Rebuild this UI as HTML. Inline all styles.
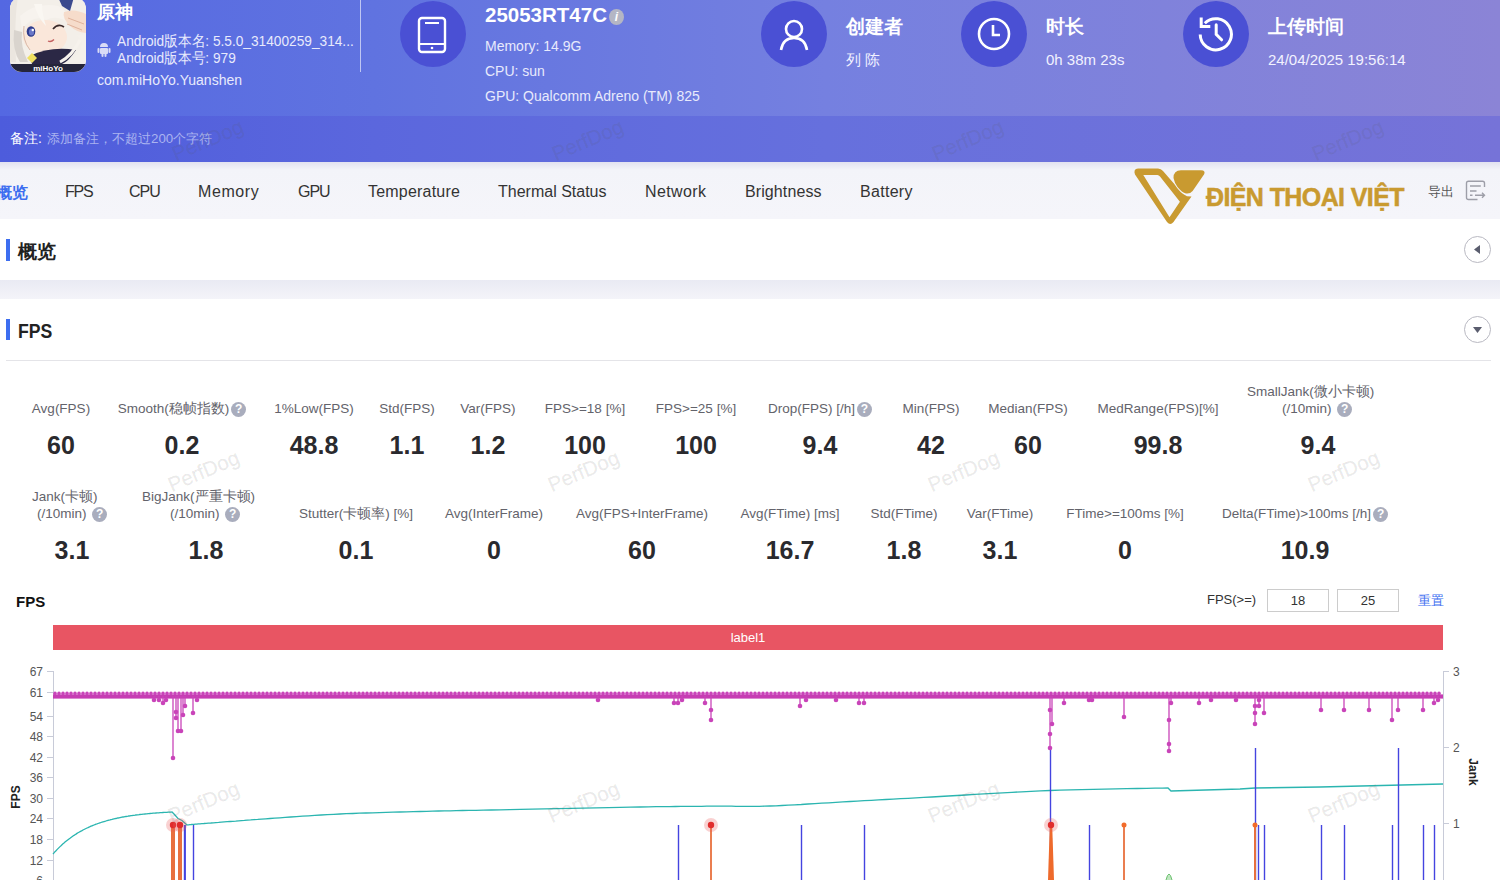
<!DOCTYPE html>
<html><head><meta charset="utf-8">
<style>
*{margin:0;padding:0;box-sizing:border-box}
html,body{width:1500px;height:880px;overflow:hidden;background:#fff;font-family:"Liberation Sans",sans-serif;position:relative}
.abs{position:absolute;white-space:nowrap}
#hdr{position:absolute;left:0;top:0;width:1500px;height:116px;background:linear-gradient(90deg,#5468e2 0%,#6073e0 25%,#7580e0 55%,#8b84d6 100%)}
#band{position:absolute;left:0;top:116px;width:1500px;height:46px;background:linear-gradient(90deg,#4d5cdc 0%,#5b67dd 25%,#6670dd 55%,#7673d8 100%)}
#nav{position:absolute;left:0;top:162px;width:1500px;height:57px;background:linear-gradient(180deg,#e2e2f0 0px,#f3f4f9 8px,#f5f5fa 100%)}
#sec1{position:absolute;left:0;top:219px;width:1500px;height:61px;background:#fff}
#gap{position:absolute;left:0;top:280px;width:1500px;height:19px;background:linear-gradient(180deg,#e9eaf3,#f4f4f9)}
.circ{position:absolute;width:66px;height:66px;border-radius:50%;background:#4a50d4}
.ht{position:absolute;color:#fff;font-weight:bold;font-size:19px;white-space:nowrap}
.hs{position:absolute;color:#e8eafc;font-size:14px;white-space:nowrap}
.tab{position:absolute;top:183px;font-size:16px;color:#333;white-space:nowrap}
.lbl{position:absolute;font-size:13.5px;color:#63636b;white-space:nowrap;text-align:center;line-height:17px}
.val{position:absolute;font-size:25px;font-weight:bold;color:#2a2a2e;white-space:nowrap;text-align:center}
.q{display:inline-block;width:15px;height:15px;border-radius:50%;background:#a9adbd;color:#fff;font-size:12px;font-weight:bold;line-height:15px;text-align:center;vertical-align:0px;margin-left:2px}
.wm{position:absolute;font-size:20.5px;color:rgba(90,90,90,0.12);transform:rotate(-23deg);-webkit-text-stroke:0.3px rgba(90,90,90,0.12);white-space:nowrap}
.chart{position:absolute;left:0;top:0}
.tk{font-size:12px;fill:#555;font-family:"Liberation Sans",sans-serif}
.ax{font-size:12px;fill:#222;font-weight:bold;font-family:"Liberation Sans",sans-serif}
.sbar{position:absolute;left:6px;width:4px;background:#3d6ef0}
.stitle{position:absolute;left:17px;font-size:19px;font-weight:bold;color:#222}
.tog{position:absolute;left:1464px;width:27px;height:27px;border-radius:50%;border:1.3px solid #b9b9c2;background:#fff}
.inp{position:absolute;top:589px;width:62px;height:23px;border:1px solid #ccc;font-size:13px;color:#333;text-align:center;line-height:21px}
</style></head><body>
<div id="hdr"></div>
<div id="band"></div>
<!-- app icon -->
<div class="abs" style="left:10px;top:-3px;width:76px;height:75px;border-radius:12px;overflow:hidden;background:#efe9e2">
  <svg width="76" height="75" viewBox="0 -3 76 75">
    <rect x="0" y="-3" width="76" height="75" fill="#f3efe9"/>
    <path d="M0,-3 L8,-3 Q4,20 6,62 L0,62Z" fill="#ebe6df"/>
    <path d="M4,30 Q2,50 10,62 L18,62 Q10,46 12,32Z" fill="#d9d4ce"/>
    <ellipse cx="35" cy="37" rx="22" ry="17" fill="#fae7da"/>
    <path d="M10,16 Q26,2 48,6 Q58,10 60,24 Q48,14 36,20 Q22,14 12,30Z" fill="#f7f3ee"/>
    <path d="M24,4 Q28,18 36,26 Q32,14 32,4Z" fill="#faf7f2"/>
    <path d="M14,26 Q12,40 20,50" stroke="#d8b8a8" stroke-width="1" fill="none"/>
    <ellipse cx="21" cy="31.5" rx="4.3" ry="5.3" fill="#2e3c8c"/>
    <ellipse cx="21.5" cy="32" rx="2.6" ry="3.6" fill="#6a78c8"/>
    <circle cx="22.8" cy="30" r="1.2" fill="#fff"/>
    <path d="M43,29 Q48,23 54,27" stroke="#3a2a2a" stroke-width="1.7" fill="none"/>
    <path d="M38,41 Q41,42.5 44,39.5" stroke="#c46060" stroke-width="1.3" fill="none"/>
    <path d="M54,12 Q64,8 76,14 L76,33 Q66,32 60,26 Q52,18 54,12Z" fill="#f6dccb"/>
    <path d="M58,18 L74,24 M57,24 L72,30" stroke="#d9a890" stroke-width="0.8" fill="none"/>
    <path d="M48,-3 L64,-3 L60,11 L52,6Z" fill="#3b4a8e"/>
    <path d="M62,36 Q70,34 72,44 Q70,56 58,62 L76,62 L76,34Z" fill="#f4f0ea"/>
    <path d="M20,56 Q40,46 66,50 Q58,62 52,64 L22,64Z" fill="#2b2845"/>
    <path d="M50,62 Q62,56 70,40" stroke="#f6f2ec" stroke-width="3" fill="none"/>
    <path d="M17,58 l5,-5 l5,5 l-5,5z" fill="#efe060"/>
    <rect x="0" y="64" width="76" height="8" fill="#25253a"/>
    <text x="38" y="71" text-anchor="middle" font-size="8" font-weight="bold" fill="#fff" font-family="Liberation Sans">miHoYo</text>
  </svg>
</div>
<div class="ht" style="left:97px;top:0px;font-size:18px">原神</div>
<svg class="abs" style="left:97px;top:42px" width="14" height="15" viewBox="0 0 14 15"><path d="M3,5 a4,4 0 0 1 8,0z" fill="#d9dcf6"/><rect x="3" y="6" width="8" height="6" rx="1" fill="#d9dcf6"/><rect x="0.5" y="6" width="2" height="5" rx="1" fill="#d9dcf6"/><rect x="11.5" y="6" width="2" height="5" rx="1" fill="#d9dcf6"/><rect x="4.5" y="11" width="2" height="4" rx="1" fill="#d9dcf6"/><rect x="7.5" y="11" width="2" height="4" rx="1" fill="#d9dcf6"/></svg>
<div class="hs" style="left:117px;top:31.5px;font-size:15px;transform:scaleX(0.913);transform-origin:0 0">Android版本名: 5.5.0_31400259_314...</div>
<div class="hs" style="left:117px;top:48.5px;font-size:15px;transform:scaleX(0.913);transform-origin:0 0">Android版本号: 979</div>
<div class="hs" style="left:97px;top:72px">com.miHoYo.Yuanshen</div>
<div class="abs" style="left:360px;top:0;width:1px;height:72px;background:rgba(255,255,255,0.6)"></div>

<div class="circ" style="left:400px;top:1px"></div>
<svg class="abs" style="left:417px;top:16px" width="30" height="38" viewBox="0 0 30 38"><rect x="2" y="2" width="26" height="34" rx="3" fill="none" stroke="#fff" stroke-width="2.4"/><line x1="8" y1="7" x2="22" y2="7" stroke="#fff" stroke-width="2"/><line x1="2" y1="28" x2="28" y2="28" stroke="#fff" stroke-width="2"/><circle cx="15" cy="32" r="1.3" fill="#fff"/></svg>
<div class="ht" style="left:485px;top:3px;font-size:20.5px">25053RT47C</div>
<div class="abs" style="left:609px;top:9px;width:15px;height:16px;border-radius:50%;background:#b4b6c4;color:#fff;font-size:12px;font-style:italic;font-weight:bold;text-align:center;line-height:16px">i</div>
<div class="hs" style="left:485px;top:38px">Memory: 14.9G</div>
<div class="hs" style="left:485px;top:63px">CPU: sun</div>
<div class="hs" style="left:485px;top:88px">GPU: Qualcomm Adreno (TM) 825</div>

<div class="circ" style="left:761px;top:1px"></div>
<svg class="abs" style="left:776px;top:16px" width="36" height="36" viewBox="0 0 36 36"><circle cx="18" cy="13" r="8" fill="none" stroke="#fff" stroke-width="2.6"/><path d="M5,34 Q7,22 18,22 Q29,22 31,34" fill="none" stroke="#fff" stroke-width="2.6"/></svg>
<div class="ht" style="left:846px;top:14px">创建者</div>
<div class="hs" style="left:846px;top:50.5px;font-size:15px;color:#f2f2ff">列 陈</div>

<div class="circ" style="left:961px;top:1px"></div>
<svg class="abs" style="left:976px;top:16px" width="36" height="36" viewBox="0 0 36 36"><circle cx="18" cy="18" r="15" fill="none" stroke="#fff" stroke-width="2.6"/><path d="M17,9 L17,19 L24,19" fill="none" stroke="#fff" stroke-width="2.6"/></svg>
<div class="ht" style="left:1046px;top:14px">时长</div>
<div class="hs" style="left:1046px;top:50.5px;font-size:15px;color:#f2f2ff">0h 38m 23s</div>

<div class="circ" style="left:1183px;top:1px"></div>
<svg class="abs" style="left:1198px;top:16px" width="36" height="36" viewBox="0 0 36 36"><path d="M2.2,18.5 A15.6,15.6 0 1 0 6.8,7.2" fill="none" stroke="#fff" stroke-width="3"/><path d="M3.2,1.5 V10.6 H12.3" fill="none" stroke="#fff" stroke-width="3"/><path d="M18.2,8.8 V18.4 L23.6,23.8" fill="none" stroke="#fff" stroke-width="3" stroke-linecap="round"/></svg>
<div class="ht" style="left:1268px;top:14px">上传时间</div>
<div class="hs" style="left:1268px;top:50.5px;font-size:15px;color:#f2f2ff">24/04/2025 19:56:14</div>

<div class="abs" style="left:10px;top:129.5px;font-size:14px;color:#fff">备注:</div>
<div class="abs" style="left:47px;top:130px;font-size:13.3px;color:#aab3f0">添加备注，不超过200个字符</div>

<div id="nav"></div>
<div class="tab" style="left:-4px;color:#3d6ef0;font-weight:bold;font-size:15.5px">概览</div>
<div class="tab" style="left:65px;letter-spacing:-1.2px">FPS</div>
<div class="tab" style="left:129px;letter-spacing:-1px">CPU</div>
<div class="tab" style="left:198px;letter-spacing:0.6px">Memory</div>
<div class="tab" style="left:298px;letter-spacing:-1px">GPU</div>
<div class="tab" style="left:368px;letter-spacing:0.2px">Temperature</div>
<div class="tab" style="left:498px;letter-spacing:0px">Thermal Status</div>
<div class="tab" style="left:645px;letter-spacing:0.4px">Network</div>
<div class="tab" style="left:745px;letter-spacing:0.1px">Brightness</div>
<div class="tab" style="left:860px;letter-spacing:0.3px">Battery</div>
<!-- logo -->
<svg class="abs" style="left:1125px;top:160px;z-index:5" width="90" height="70" viewBox="0 0 90 70"><path fill-rule="evenodd" d="M13,8.4 L33,8.4 Q36,8.6 38,11 L49.3,23.9 Q55,33 62,36.2 L66.5,36.6 L48.5,62 Q45.3,66 42,62 L10,14.5 Q8,9 13,8.4 Z M18.3,15.1 L32.5,15.1 Q33.8,15.2 35,16.5 L54.9,41.8 L44.5,57.3 Z" fill="#c99a30"/><path d="M48.5,18 Q48.5,10.3 56,10.3 L76,10.3 Q81,10.5 79,14.5 L67.6,31 Q65,34 61,33.4 Q57,32.6 52.5,27 Q49.5,23 48.5,18 Z" fill="#c99a30"/></svg>
<div class="abs" style="left:1206px;top:182.5px;font-size:25px;font-weight:bold;color:#c99a30;letter-spacing:-0.6px;-webkit-text-stroke:0.5px #c99a30;transform:scaleY(1.06);transform-origin:0 100%;z-index:5">ĐIỆN THOẠI VIỆT</div>
<div class="abs" style="left:1428px;top:183px;font-size:13px;color:#555">导出</div>
<svg class="abs" style="left:1465px;top:180px" width="22" height="22" viewBox="0 0 22 22"><path d="M12.5,19.5 H3.5 Q1.5,19.5 1.5,17.5 V3.2 Q1.5,1.2 3.5,1.2 H17.5 Q19.5,1.2 19.5,3.2 V7" fill="none" stroke="#9d9ea8" stroke-width="1.4"/><path d="M5,6 H15.8 M5,11 H11.5 M5,15.3 H7.5 M10,15.3 H19.5 M17,12.8 L19.5,15.3 L17,17.8" fill="none" stroke="#9d9ea8" stroke-width="1.4"/></svg>

<div id="sec1"></div>
<div class="sbar" style="top:238.5px;height:22.5px"></div>
<div class="stitle" style="top:238.5px;left:18px">概览</div>
<div class="tog" style="top:236px"><svg width="25" height="25" viewBox="0 0 25 25"><path d="M15,8 L15,17 L9,12.5Z" fill="#5a5d6e"/></svg></div>
<div id="gap"></div>

<div class="sbar" style="top:318.5px;height:21.5px"></div>
<div class="stitle" style="top:318.5px;left:18px;font-size:20.5px;transform:scaleX(0.86);transform-origin:0 0">FPS</div>
<div class="tog" style="top:316px"><svg width="25" height="25" viewBox="0 0 25 25"><path d="M8,10 L17,10 L12.5,16Z" fill="#5a5d6e"/></svg></div>
<div class="abs" style="left:6px;top:360px;width:1485px;height:1px;background:#e4e4e8"></div>

<div class="lbl" style="left:-59px;width:240px;top:400px">Avg(FPS)</div>
<div class="val" style="left:-59px;width:240px;top:431px">60</div>
<div class="lbl" style="left:62px;width:240px;top:400px">Smooth(稳帧指数)<span class="q">?</span></div>
<div class="val" style="left:62px;width:240px;top:431px">0.2</div>
<div class="lbl" style="left:194px;width:240px;top:400px">1%Low(FPS)</div>
<div class="val" style="left:194px;width:240px;top:431px">48.8</div>
<div class="lbl" style="left:287px;width:240px;top:400px">Std(FPS)</div>
<div class="val" style="left:287px;width:240px;top:431px">1.1</div>
<div class="lbl" style="left:368px;width:240px;top:400px">Var(FPS)</div>
<div class="val" style="left:368px;width:240px;top:431px">1.2</div>
<div class="lbl" style="left:465px;width:240px;top:400px">FPS&gt;=18 [%]</div>
<div class="val" style="left:465px;width:240px;top:431px">100</div>
<div class="lbl" style="left:576px;width:240px;top:400px">FPS&gt;=25 [%]</div>
<div class="val" style="left:576px;width:240px;top:431px">100</div>
<div class="lbl" style="left:700px;width:240px;top:400px">Drop(FPS) [/h]<span class="q">?</span></div>
<div class="val" style="left:700px;width:240px;top:431px">9.4</div>
<div class="lbl" style="left:811px;width:240px;top:400px">Min(FPS)</div>
<div class="val" style="left:811px;width:240px;top:431px">42</div>
<div class="lbl" style="left:908px;width:240px;top:400px">Median(FPS)</div>
<div class="val" style="left:908px;width:240px;top:431px">60</div>
<div class="lbl" style="left:1038px;width:240px;top:400px">MedRange(FPS)[%]</div>
<div class="val" style="left:1038px;width:240px;top:431px">99.8</div>
<div class="lbl" style="left:1247px;top:383px">SmallJank(微小卡顿)</div><div class="lbl" style="left:1282px;top:400px">(/10min) <span class="q">?</span></div>
<div class="val" style="left:1198px;width:240px;top:431px">9.4</div>
<div class="lbl" style="left:32px;top:488px">Jank(卡顿)</div><div class="lbl" style="left:37px;top:505px">(/10min) <span class="q">?</span></div>
<div class="val" style="left:-48px;width:240px;top:536px">3.1</div>
<div class="lbl" style="left:142px;top:488px">BigJank(严重卡顿)</div><div class="lbl" style="left:170px;top:505px">(/10min) <span class="q">?</span></div>
<div class="val" style="left:86px;width:240px;top:536px">1.8</div>
<div class="lbl" style="left:236px;width:240px;top:505px">Stutter(卡顿率) [%]</div>
<div class="val" style="left:236px;width:240px;top:536px">0.1</div>
<div class="lbl" style="left:374px;width:240px;top:505px">Avg(InterFrame)</div>
<div class="val" style="left:374px;width:240px;top:536px">0</div>
<div class="lbl" style="left:522px;width:240px;top:505px">Avg(FPS+InterFrame)</div>
<div class="val" style="left:522px;width:240px;top:536px">60</div>
<div class="lbl" style="left:670px;width:240px;top:505px">Avg(FTime) [ms]</div>
<div class="val" style="left:670px;width:240px;top:536px">16.7</div>
<div class="lbl" style="left:784px;width:240px;top:505px">Std(FTime)</div>
<div class="val" style="left:784px;width:240px;top:536px">1.8</div>
<div class="lbl" style="left:880px;width:240px;top:505px">Var(FTime)</div>
<div class="val" style="left:880px;width:240px;top:536px">3.1</div>
<div class="lbl" style="left:1005px;width:240px;top:505px">FTime&gt;=100ms [%]</div>
<div class="val" style="left:1005px;width:240px;top:536px">0</div>
<div class="lbl" style="left:1185px;width:240px;top:505px">Delta(FTime)&gt;100ms [/h]<span class="q">?</span></div>
<div class="val" style="left:1185px;width:240px;top:536px">10.9</div>

<div class="abs" style="left:16px;top:593px;font-size:15px;font-weight:bold;color:#111">FPS</div>
<div class="abs" style="left:1207px;top:592px;font-size:13px;color:#333">FPS(&gt;=)</div>
<div class="inp" style="left:1267px">18</div>
<div class="inp" style="left:1337px">25</div>
<div class="abs" style="left:1418px;top:592px;font-size:13px;color:#3d6ef0">重置</div>
<div class="abs" style="left:53px;top:625px;width:1390px;height:25px;background:#e85563;color:#fff;font-size:13px;text-align:center;line-height:25px">label1</div>

<svg class="chart" width="1500" height="880" viewBox="0 0 1500 880">
<line x1="53.5" y1="671" x2="53.5" y2="880" stroke="#c8cbd8" stroke-width="1"/>
<line x1="1443.5" y1="671" x2="1443.5" y2="880" stroke="#c8cbd8" stroke-width="1"/>
<line x1="47" y1="671.5" x2="53" y2="671.5" stroke="#c8cbd8"/>
<text x="43" y="675.5" text-anchor="end" class="tk">67</text>
<line x1="47" y1="692.5" x2="53" y2="692.5" stroke="#c8cbd8"/>
<text x="43" y="696.5" text-anchor="end" class="tk">61</text>
<line x1="47" y1="716.5" x2="53" y2="716.5" stroke="#c8cbd8"/>
<text x="43" y="720.5" text-anchor="end" class="tk">54</text>
<line x1="47" y1="736.5" x2="53" y2="736.5" stroke="#c8cbd8"/>
<text x="43" y="740.5" text-anchor="end" class="tk">48</text>
<line x1="47" y1="757.5" x2="53" y2="757.5" stroke="#c8cbd8"/>
<text x="43" y="761.5" text-anchor="end" class="tk">42</text>
<line x1="47" y1="777.5" x2="53" y2="777.5" stroke="#c8cbd8"/>
<text x="43" y="781.5" text-anchor="end" class="tk">36</text>
<line x1="47" y1="798.5" x2="53" y2="798.5" stroke="#c8cbd8"/>
<text x="43" y="802.5" text-anchor="end" class="tk">30</text>
<line x1="47" y1="818.5" x2="53" y2="818.5" stroke="#c8cbd8"/>
<text x="43" y="822.5" text-anchor="end" class="tk">24</text>
<line x1="47" y1="839.5" x2="53" y2="839.5" stroke="#c8cbd8"/>
<text x="43" y="843.5" text-anchor="end" class="tk">18</text>
<line x1="47" y1="860.5" x2="53" y2="860.5" stroke="#c8cbd8"/>
<text x="43" y="864.5" text-anchor="end" class="tk">12</text>
<line x1="47" y1="880.5" x2="53" y2="880.5" stroke="#c8cbd8"/>
<text x="43" y="884.5" text-anchor="end" class="tk">6</text>
<line x1="1443" y1="671.5" x2="1449" y2="671.5" stroke="#c8cbd8"/>
<text x="1453" y="675.5" class="tk">3</text>
<line x1="1443" y1="747.5" x2="1449" y2="747.5" stroke="#c8cbd8"/>
<text x="1453" y="751.5" class="tk">2</text>
<line x1="1443" y1="823.5" x2="1449" y2="823.5" stroke="#c8cbd8"/>
<text x="1453" y="827.5" class="tk">1</text>
<text transform="translate(20,797) rotate(-90)" text-anchor="middle" class="ax">FPS</text>
<text transform="translate(1469,772) rotate(90)" text-anchor="middle" class="ax">Jank</text>
<path d="M53.0,854.0 L54.0,852.9 L55.0,851.7 L56.0,850.7 L57.0,849.6 L58.0,848.6 L59.0,847.6 L60.0,846.6 L61.0,845.7 L62.0,844.7 L63.0,843.8 L64.0,843.0 L65.0,842.1 L66.0,841.3 L67.0,840.5 L68.0,839.7 L69.0,838.9 L70.0,838.2 L71.0,837.4 L72.0,836.7 L73.0,836.0 L74.0,835.4 L75.0,834.7 L76.0,834.1 L77.0,833.4 L78.0,832.8 L79.0,832.2 L80.0,831.7 L81.0,831.1 L82.0,830.6 L83.0,830.0 L84.0,829.5 L85.0,829.0 L86.0,828.5 L87.0,828.0 L88.0,827.6 L89.0,827.1 L90.0,826.7 L91.0,826.2 L92.0,825.8 L93.0,825.4 L94.0,825.0 L95.0,824.6 L96.0,824.2 L97.0,823.9 L98.0,823.5 L99.0,823.2 L100.0,822.8 L101.0,822.5 L102.0,822.2 L103.0,821.9 L104.0,821.6 L105.0,821.3 L106.0,821.0 L107.0,820.7 L108.0,820.4 L109.0,820.1 L110.0,819.9 L111.0,819.6 L112.0,819.4 L113.0,819.1 L114.0,818.9 L115.0,818.7 L116.0,818.5 L117.0,818.2 L118.0,818.0 L119.0,817.8 L120.0,817.6 L121.0,817.4 L122.0,817.2 L123.0,817.0 L124.0,816.9 L125.0,816.7 L126.0,816.5 L127.0,816.3 L128.0,816.2 L129.0,816.0 L130.0,815.9 L131.0,815.7 L132.0,815.6 L133.0,815.4 L134.0,815.3 L135.0,815.2 L136.0,815.0 L137.0,814.9 L138.0,814.8 L139.0,814.7 L140.0,814.5 L141.0,814.4 L142.0,814.3 L143.0,814.2 L144.0,814.1 L145.0,814.0 L146.0,813.9 L147.0,813.8 L148.0,813.7 L149.0,813.6 L150.0,813.5 L151.0,813.4 L152.0,813.3 L153.0,813.2 L154.0,813.2 L155.0,813.1 L156.0,813.0 L157.0,812.9 L158.0,812.9 L159.0,812.8 L160.0,812.7 L161.0,812.6 L162.0,812.6 L163.0,812.5 L164.0,812.4 L165.0,812.4 L166.0,812.3 L167.0,812.3 L168.0,812.2 L169.0,812.2 L170.0,812.1 L171.0,812.1 L172.0,812.0 L174.0,814.0 L178.0,818.5 L182.0,820.5 L187.0,825.0 L187.0,825.0 L187.6,824.9 L188.2,824.9 L188.9,824.8 L189.7,824.7 L190.6,824.6 L191.6,824.5 L192.7,824.4 L193.9,824.3 L195.2,824.2 L196.7,824.1 L198.3,823.9 L200.0,823.8 L201.9,823.6 L203.9,823.5 L206.1,823.3 L208.4,823.1 L210.8,823.0 L213.3,822.8 L215.9,822.6 L218.6,822.4 L221.4,822.1 L224.2,821.9 L227.1,821.7 L230.0,821.5 L232.9,821.3 L235.7,821.1 L238.6,820.8 L241.5,820.6 L244.4,820.4 L247.5,820.1 L250.7,819.9 L254.1,819.6 L257.7,819.4 L261.5,819.1 L265.6,818.8 L270.0,818.5 L274.8,818.2 L279.8,817.8 L285.2,817.4 L290.7,817.0 L296.5,816.6 L302.5,816.2 L308.6,815.8 L314.8,815.4 L321.1,815.0 L327.4,814.7 L333.7,814.3 L340.0,814.0 L346.3,813.7 L352.8,813.5 L359.3,813.2 L365.9,813.0 L372.6,812.8 L379.4,812.6 L386.2,812.4 L393.0,812.2 L399.8,812.0 L406.6,811.8 L413.3,811.7 L420.0,811.5 L426.5,811.3 L432.6,811.2 L438.6,811.0 L444.4,810.9 L450.3,810.8 L456.2,810.7 L462.4,810.5 L468.9,810.4 L475.8,810.3 L483.2,810.1 L491.2,810.0 L500.0,809.8 L509.8,809.6 L520.6,809.4 L532.4,809.1 L544.7,808.9 L557.5,808.6 L570.5,808.3 L583.4,808.1 L596.1,807.8 L608.4,807.6 L619.9,807.4 L630.5,807.2 L640.0,807.0 L648.4,806.9 L656.1,806.7 L663.1,806.6 L669.6,806.6 L675.5,806.5 L681.1,806.4 L686.4,806.4 L691.6,806.3 L696.6,806.3 L701.6,806.3 L706.7,806.2 L712.0,806.2 L717.3,806.2 L722.2,806.2 L727.0,806.2 L731.6,806.2 L736.0,806.3 L740.5,806.3 L745.0,806.4 L749.6,806.4 L754.3,806.3 L759.2,806.3 L764.4,806.2 L770.0,806.0 L775.9,805.8 L781.9,805.5 L788.2,805.2 L794.7,804.8 L801.3,804.5 L808.0,804.0 L814.8,803.6 L821.8,803.2 L828.8,802.8 L835.8,802.3 L842.9,801.9 L850.0,801.5 L857.1,801.1 L864.2,800.7 L871.3,800.3 L878.5,799.9 L885.8,799.5 L893.1,799.1 L900.6,798.7 L908.1,798.3 L915.9,797.8 L923.7,797.4 L931.8,797.0 L940.0,796.5 L948.4,796.0 L957.1,795.5 L965.9,795.0 L974.9,794.4 L984.0,793.9 L993.2,793.3 L1002.6,792.8 L1012.0,792.3 L1021.5,791.8 L1031.0,791.3 L1040.5,790.9 L1050.0,790.5 L1059.9,790.2 L1070.6,789.9 L1081.7,789.6 L1093.1,789.3 L1104.6,789.1 L1115.9,788.9 L1126.8,788.7 L1137.1,788.5 L1146.6,788.4 L1155.1,788.2 L1162.3,788.1 L1168.0,788.0 L1171.0,791.0 L1240.0,789.0 L1255.0,788.0 L1320.0,787.0 L1443.0,784.0" fill="none" stroke="#2bb5b0" stroke-width="1.3"/>
<line x1="184.5" y1="825" x2="184.5" y2="880" stroke="#4444e0" stroke-width="1.4"/>
<line x1="185.2" y1="825" x2="185.2" y2="880" stroke="#4444e0" stroke-width="1.4"/>
<line x1="193.5" y1="825" x2="193.5" y2="880" stroke="#4444e0" stroke-width="1.4"/>
<line x1="678.5" y1="825" x2="678.5" y2="880" stroke="#4444e0" stroke-width="1.4"/>
<line x1="801.5" y1="825" x2="801.5" y2="880" stroke="#4444e0" stroke-width="1.4"/>
<line x1="864.5" y1="825" x2="864.5" y2="880" stroke="#4444e0" stroke-width="1.4"/>
<line x1="1050.5" y1="748" x2="1050.5" y2="880" stroke="#4444e0" stroke-width="1.4"/>
<line x1="1089.5" y1="825" x2="1089.5" y2="880" stroke="#4444e0" stroke-width="1.4"/>
<line x1="1255.5" y1="748" x2="1255.5" y2="880" stroke="#4444e0" stroke-width="1.4"/>
<line x1="1258.5" y1="825" x2="1258.5" y2="880" stroke="#4444e0" stroke-width="1.4"/>
<line x1="1264.5" y1="825" x2="1264.5" y2="880" stroke="#4444e0" stroke-width="1.4"/>
<line x1="1321.5" y1="825" x2="1321.5" y2="880" stroke="#4444e0" stroke-width="1.4"/>
<line x1="1344.5" y1="825" x2="1344.5" y2="880" stroke="#4444e0" stroke-width="1.4"/>
<line x1="1392.5" y1="825" x2="1392.5" y2="880" stroke="#4444e0" stroke-width="1.4"/>
<line x1="1398.5" y1="748" x2="1398.5" y2="880" stroke="#4444e0" stroke-width="1.4"/>
<line x1="1423.5" y1="825" x2="1423.5" y2="880" stroke="#4444e0" stroke-width="1.4"/>
<line x1="1434.5" y1="825" x2="1434.5" y2="880" stroke="#4444e0" stroke-width="1.4"/>
<rect x="171.0" y="825" width="4" height="55" fill="#e8703e"/>
<rect x="178.0" y="825" width="4" height="55" fill="#e8703e"/>
<rect x="710.1" y="825" width="1.8" height="55" fill="#e8703e"/>
<polygon points="1049.8,825 1052.2,825 1054,880 1048,880" fill="#ee6a2c"/>
<rect x="1123.1" y="825" width="1.8" height="55" fill="#e8703e"/>
<rect x="1254.0" y="825" width="2" height="55" fill="#e8703e"/>
<circle cx="173" cy="825" r="7" fill="#e85a5a" opacity="0.28"/>
<circle cx="173" cy="825" r="3.2" fill="#e02c2c"/>
<circle cx="180" cy="825" r="7" fill="#e85a5a" opacity="0.28"/>
<circle cx="180" cy="825" r="3.2" fill="#e02c2c"/>
<circle cx="711" cy="825" r="7" fill="#e85a5a" opacity="0.28"/>
<circle cx="711" cy="825" r="3.2" fill="#e02c2c"/>
<circle cx="1051" cy="825" r="7" fill="#e85a5a" opacity="0.28"/>
<circle cx="1051" cy="825" r="3.2" fill="#e02c2c"/>
<circle cx="1124" cy="825" r="2.5" fill="#f26b2a"/>
<circle cx="1255" cy="825" r="2.5" fill="#f26b2a"/>
<path d="M1166,880 Q1169,868 1172,880" fill="#bfe6c0" stroke="#6cc070" stroke-width="1"/>
<rect x="53" y="694.4" width="1390" height="4.2" fill="#c63db3"/>
<g fill="#c944b9"><circle cx="55.00" cy="693.4" r="1.8"/><circle cx="59.00" cy="693.4" r="1.8"/><circle cx="63.00" cy="693.4" r="1.8"/><circle cx="67.00" cy="693.4" r="1.8"/><circle cx="71.00" cy="693.4" r="1.8"/><circle cx="75.00" cy="693.4" r="1.8"/><circle cx="79.00" cy="693.4" r="1.8"/><circle cx="83.00" cy="693.4" r="1.8"/><circle cx="87.00" cy="693.4" r="1.8"/><circle cx="91.00" cy="693.4" r="1.8"/><circle cx="95.00" cy="693.4" r="1.8"/><circle cx="99.00" cy="693.4" r="1.8"/><circle cx="103.00" cy="693.4" r="1.8"/><circle cx="107.00" cy="693.4" r="1.8"/><circle cx="111.00" cy="693.4" r="1.8"/><circle cx="115.00" cy="693.4" r="1.8"/><circle cx="119.00" cy="693.4" r="1.8"/><circle cx="123.00" cy="693.4" r="1.8"/><circle cx="127.00" cy="693.4" r="1.8"/><circle cx="131.00" cy="693.4" r="1.8"/><circle cx="135.00" cy="693.4" r="1.8"/><circle cx="139.00" cy="693.4" r="1.8"/><circle cx="143.00" cy="693.4" r="1.8"/><circle cx="147.00" cy="693.4" r="1.8"/><circle cx="151.00" cy="693.4" r="1.8"/><circle cx="155.00" cy="693.4" r="1.8"/><circle cx="159.00" cy="693.4" r="1.8"/><circle cx="163.00" cy="693.4" r="1.8"/><circle cx="167.00" cy="693.4" r="1.8"/><circle cx="171.00" cy="693.4" r="1.8"/><circle cx="175.00" cy="693.4" r="1.8"/><circle cx="179.00" cy="693.4" r="1.8"/><circle cx="183.00" cy="693.4" r="1.8"/><circle cx="187.00" cy="693.4" r="1.8"/><circle cx="191.00" cy="693.4" r="1.8"/><circle cx="195.00" cy="693.4" r="1.8"/><circle cx="199.00" cy="693.4" r="1.8"/><circle cx="203.00" cy="693.4" r="1.8"/><circle cx="207.00" cy="693.4" r="1.8"/><circle cx="211.00" cy="693.4" r="1.8"/><circle cx="215.00" cy="693.4" r="1.8"/><circle cx="219.00" cy="693.4" r="1.8"/><circle cx="223.00" cy="693.4" r="1.8"/><circle cx="227.00" cy="693.4" r="1.8"/><circle cx="231.00" cy="693.4" r="1.8"/><circle cx="235.00" cy="693.4" r="1.8"/><circle cx="239.00" cy="693.4" r="1.8"/><circle cx="243.00" cy="693.4" r="1.8"/><circle cx="247.00" cy="693.4" r="1.8"/><circle cx="251.00" cy="693.4" r="1.8"/><circle cx="255.00" cy="693.4" r="1.8"/><circle cx="259.00" cy="693.4" r="1.8"/><circle cx="263.00" cy="693.4" r="1.8"/><circle cx="267.00" cy="693.4" r="1.8"/><circle cx="271.00" cy="693.4" r="1.8"/><circle cx="275.00" cy="693.4" r="1.8"/><circle cx="279.00" cy="693.4" r="1.8"/><circle cx="283.00" cy="693.4" r="1.8"/><circle cx="287.00" cy="693.4" r="1.8"/><circle cx="291.00" cy="693.4" r="1.8"/><circle cx="295.00" cy="693.4" r="1.8"/><circle cx="299.00" cy="693.4" r="1.8"/><circle cx="303.00" cy="693.4" r="1.8"/><circle cx="307.00" cy="693.4" r="1.8"/><circle cx="311.00" cy="693.4" r="1.8"/><circle cx="315.00" cy="693.4" r="1.8"/><circle cx="319.00" cy="693.4" r="1.8"/><circle cx="323.00" cy="693.4" r="1.8"/><circle cx="327.00" cy="693.4" r="1.8"/><circle cx="331.00" cy="693.4" r="1.8"/><circle cx="335.00" cy="693.4" r="1.8"/><circle cx="339.00" cy="693.4" r="1.8"/><circle cx="343.00" cy="693.4" r="1.8"/><circle cx="347.00" cy="693.4" r="1.8"/><circle cx="351.00" cy="693.4" r="1.8"/><circle cx="355.00" cy="693.4" r="1.8"/><circle cx="359.00" cy="693.4" r="1.8"/><circle cx="363.00" cy="693.4" r="1.8"/><circle cx="367.00" cy="693.4" r="1.8"/><circle cx="371.00" cy="693.4" r="1.8"/><circle cx="375.00" cy="693.4" r="1.8"/><circle cx="379.00" cy="693.4" r="1.8"/><circle cx="383.00" cy="693.4" r="1.8"/><circle cx="387.00" cy="693.4" r="1.8"/><circle cx="391.00" cy="693.4" r="1.8"/><circle cx="395.00" cy="693.4" r="1.8"/><circle cx="399.00" cy="693.4" r="1.8"/><circle cx="403.00" cy="693.4" r="1.8"/><circle cx="407.00" cy="693.4" r="1.8"/><circle cx="411.00" cy="693.4" r="1.8"/><circle cx="415.00" cy="693.4" r="1.8"/><circle cx="419.00" cy="693.4" r="1.8"/><circle cx="423.00" cy="693.4" r="1.8"/><circle cx="427.00" cy="693.4" r="1.8"/><circle cx="431.00" cy="693.4" r="1.8"/><circle cx="435.00" cy="693.4" r="1.8"/><circle cx="439.00" cy="693.4" r="1.8"/><circle cx="443.00" cy="693.4" r="1.8"/><circle cx="447.00" cy="693.4" r="1.8"/><circle cx="451.00" cy="693.4" r="1.8"/><circle cx="455.00" cy="693.4" r="1.8"/><circle cx="459.00" cy="693.4" r="1.8"/><circle cx="463.00" cy="693.4" r="1.8"/><circle cx="467.00" cy="693.4" r="1.8"/><circle cx="471.00" cy="693.4" r="1.8"/><circle cx="475.00" cy="693.4" r="1.8"/><circle cx="479.00" cy="693.4" r="1.8"/><circle cx="483.00" cy="693.4" r="1.8"/><circle cx="487.00" cy="693.4" r="1.8"/><circle cx="491.00" cy="693.4" r="1.8"/><circle cx="495.00" cy="693.4" r="1.8"/><circle cx="499.00" cy="693.4" r="1.8"/><circle cx="503.00" cy="693.4" r="1.8"/><circle cx="507.00" cy="693.4" r="1.8"/><circle cx="511.00" cy="693.4" r="1.8"/><circle cx="515.00" cy="693.4" r="1.8"/><circle cx="519.00" cy="693.4" r="1.8"/><circle cx="523.00" cy="693.4" r="1.8"/><circle cx="527.00" cy="693.4" r="1.8"/><circle cx="531.00" cy="693.4" r="1.8"/><circle cx="535.00" cy="693.4" r="1.8"/><circle cx="539.00" cy="693.4" r="1.8"/><circle cx="543.00" cy="693.4" r="1.8"/><circle cx="547.00" cy="693.4" r="1.8"/><circle cx="551.00" cy="693.4" r="1.8"/><circle cx="555.00" cy="693.4" r="1.8"/><circle cx="559.00" cy="693.4" r="1.8"/><circle cx="563.00" cy="693.4" r="1.8"/><circle cx="567.00" cy="693.4" r="1.8"/><circle cx="571.00" cy="693.4" r="1.8"/><circle cx="575.00" cy="693.4" r="1.8"/><circle cx="579.00" cy="693.4" r="1.8"/><circle cx="583.00" cy="693.4" r="1.8"/><circle cx="587.00" cy="693.4" r="1.8"/><circle cx="591.00" cy="693.4" r="1.8"/><circle cx="595.00" cy="693.4" r="1.8"/><circle cx="599.00" cy="693.4" r="1.8"/><circle cx="603.00" cy="693.4" r="1.8"/><circle cx="607.00" cy="693.4" r="1.8"/><circle cx="611.00" cy="693.4" r="1.8"/><circle cx="615.00" cy="693.4" r="1.8"/><circle cx="619.00" cy="693.4" r="1.8"/><circle cx="623.00" cy="693.4" r="1.8"/><circle cx="627.00" cy="693.4" r="1.8"/><circle cx="631.00" cy="693.4" r="1.8"/><circle cx="635.00" cy="693.4" r="1.8"/><circle cx="639.00" cy="693.4" r="1.8"/><circle cx="643.00" cy="693.4" r="1.8"/><circle cx="647.00" cy="693.4" r="1.8"/><circle cx="651.00" cy="693.4" r="1.8"/><circle cx="655.00" cy="693.4" r="1.8"/><circle cx="659.00" cy="693.4" r="1.8"/><circle cx="663.00" cy="693.4" r="1.8"/><circle cx="667.00" cy="693.4" r="1.8"/><circle cx="671.00" cy="693.4" r="1.8"/><circle cx="675.00" cy="693.4" r="1.8"/><circle cx="679.00" cy="693.4" r="1.8"/><circle cx="683.00" cy="693.4" r="1.8"/><circle cx="687.00" cy="693.4" r="1.8"/><circle cx="691.00" cy="693.4" r="1.8"/><circle cx="695.00" cy="693.4" r="1.8"/><circle cx="699.00" cy="693.4" r="1.8"/><circle cx="703.00" cy="693.4" r="1.8"/><circle cx="707.00" cy="693.4" r="1.8"/><circle cx="711.00" cy="693.4" r="1.8"/><circle cx="715.00" cy="693.4" r="1.8"/><circle cx="719.00" cy="693.4" r="1.8"/><circle cx="723.00" cy="693.4" r="1.8"/><circle cx="727.00" cy="693.4" r="1.8"/><circle cx="731.00" cy="693.4" r="1.8"/><circle cx="735.00" cy="693.4" r="1.8"/><circle cx="739.00" cy="693.4" r="1.8"/><circle cx="743.00" cy="693.4" r="1.8"/><circle cx="747.00" cy="693.4" r="1.8"/><circle cx="751.00" cy="693.4" r="1.8"/><circle cx="755.00" cy="693.4" r="1.8"/><circle cx="759.00" cy="693.4" r="1.8"/><circle cx="763.00" cy="693.4" r="1.8"/><circle cx="767.00" cy="693.4" r="1.8"/><circle cx="771.00" cy="693.4" r="1.8"/><circle cx="775.00" cy="693.4" r="1.8"/><circle cx="779.00" cy="693.4" r="1.8"/><circle cx="783.00" cy="693.4" r="1.8"/><circle cx="787.00" cy="693.4" r="1.8"/><circle cx="791.00" cy="693.4" r="1.8"/><circle cx="795.00" cy="693.4" r="1.8"/><circle cx="799.00" cy="693.4" r="1.8"/><circle cx="803.00" cy="693.4" r="1.8"/><circle cx="807.00" cy="693.4" r="1.8"/><circle cx="811.00" cy="693.4" r="1.8"/><circle cx="815.00" cy="693.4" r="1.8"/><circle cx="819.00" cy="693.4" r="1.8"/><circle cx="823.00" cy="693.4" r="1.8"/><circle cx="827.00" cy="693.4" r="1.8"/><circle cx="831.00" cy="693.4" r="1.8"/><circle cx="835.00" cy="693.4" r="1.8"/><circle cx="839.00" cy="693.4" r="1.8"/><circle cx="843.00" cy="693.4" r="1.8"/><circle cx="847.00" cy="693.4" r="1.8"/><circle cx="851.00" cy="693.4" r="1.8"/><circle cx="855.00" cy="693.4" r="1.8"/><circle cx="859.00" cy="693.4" r="1.8"/><circle cx="863.00" cy="693.4" r="1.8"/><circle cx="867.00" cy="693.4" r="1.8"/><circle cx="871.00" cy="693.4" r="1.8"/><circle cx="875.00" cy="693.4" r="1.8"/><circle cx="879.00" cy="693.4" r="1.8"/><circle cx="883.00" cy="693.4" r="1.8"/><circle cx="887.00" cy="693.4" r="1.8"/><circle cx="891.00" cy="693.4" r="1.8"/><circle cx="895.00" cy="693.4" r="1.8"/><circle cx="899.00" cy="693.4" r="1.8"/><circle cx="903.00" cy="693.4" r="1.8"/><circle cx="907.00" cy="693.4" r="1.8"/><circle cx="911.00" cy="693.4" r="1.8"/><circle cx="915.00" cy="693.4" r="1.8"/><circle cx="919.00" cy="693.4" r="1.8"/><circle cx="923.00" cy="693.4" r="1.8"/><circle cx="927.00" cy="693.4" r="1.8"/><circle cx="931.00" cy="693.4" r="1.8"/><circle cx="935.00" cy="693.4" r="1.8"/><circle cx="939.00" cy="693.4" r="1.8"/><circle cx="943.00" cy="693.4" r="1.8"/><circle cx="947.00" cy="693.4" r="1.8"/><circle cx="951.00" cy="693.4" r="1.8"/><circle cx="955.00" cy="693.4" r="1.8"/><circle cx="959.00" cy="693.4" r="1.8"/><circle cx="963.00" cy="693.4" r="1.8"/><circle cx="967.00" cy="693.4" r="1.8"/><circle cx="971.00" cy="693.4" r="1.8"/><circle cx="975.00" cy="693.4" r="1.8"/><circle cx="979.00" cy="693.4" r="1.8"/><circle cx="983.00" cy="693.4" r="1.8"/><circle cx="987.00" cy="693.4" r="1.8"/><circle cx="991.00" cy="693.4" r="1.8"/><circle cx="995.00" cy="693.4" r="1.8"/><circle cx="999.00" cy="693.4" r="1.8"/><circle cx="1003.00" cy="693.4" r="1.8"/><circle cx="1007.00" cy="693.4" r="1.8"/><circle cx="1011.00" cy="693.4" r="1.8"/><circle cx="1015.00" cy="693.4" r="1.8"/><circle cx="1019.00" cy="693.4" r="1.8"/><circle cx="1023.00" cy="693.4" r="1.8"/><circle cx="1027.00" cy="693.4" r="1.8"/><circle cx="1031.00" cy="693.4" r="1.8"/><circle cx="1035.00" cy="693.4" r="1.8"/><circle cx="1039.00" cy="693.4" r="1.8"/><circle cx="1043.00" cy="693.4" r="1.8"/><circle cx="1047.00" cy="693.4" r="1.8"/><circle cx="1051.00" cy="693.4" r="1.8"/><circle cx="1055.00" cy="693.4" r="1.8"/><circle cx="1059.00" cy="693.4" r="1.8"/><circle cx="1063.00" cy="693.4" r="1.8"/><circle cx="1067.00" cy="693.4" r="1.8"/><circle cx="1071.00" cy="693.4" r="1.8"/><circle cx="1075.00" cy="693.4" r="1.8"/><circle cx="1079.00" cy="693.4" r="1.8"/><circle cx="1083.00" cy="693.4" r="1.8"/><circle cx="1087.00" cy="693.4" r="1.8"/><circle cx="1091.00" cy="693.4" r="1.8"/><circle cx="1095.00" cy="693.4" r="1.8"/><circle cx="1099.00" cy="693.4" r="1.8"/><circle cx="1103.00" cy="693.4" r="1.8"/><circle cx="1107.00" cy="693.4" r="1.8"/><circle cx="1111.00" cy="693.4" r="1.8"/><circle cx="1115.00" cy="693.4" r="1.8"/><circle cx="1119.00" cy="693.4" r="1.8"/><circle cx="1123.00" cy="693.4" r="1.8"/><circle cx="1127.00" cy="693.4" r="1.8"/><circle cx="1131.00" cy="693.4" r="1.8"/><circle cx="1135.00" cy="693.4" r="1.8"/><circle cx="1139.00" cy="693.4" r="1.8"/><circle cx="1143.00" cy="693.4" r="1.8"/><circle cx="1147.00" cy="693.4" r="1.8"/><circle cx="1151.00" cy="693.4" r="1.8"/><circle cx="1155.00" cy="693.4" r="1.8"/><circle cx="1159.00" cy="693.4" r="1.8"/><circle cx="1163.00" cy="693.4" r="1.8"/><circle cx="1167.00" cy="693.4" r="1.8"/><circle cx="1171.00" cy="693.4" r="1.8"/><circle cx="1175.00" cy="693.4" r="1.8"/><circle cx="1179.00" cy="693.4" r="1.8"/><circle cx="1183.00" cy="693.4" r="1.8"/><circle cx="1187.00" cy="693.4" r="1.8"/><circle cx="1191.00" cy="693.4" r="1.8"/><circle cx="1195.00" cy="693.4" r="1.8"/><circle cx="1199.00" cy="693.4" r="1.8"/><circle cx="1203.00" cy="693.4" r="1.8"/><circle cx="1207.00" cy="693.4" r="1.8"/><circle cx="1211.00" cy="693.4" r="1.8"/><circle cx="1215.00" cy="693.4" r="1.8"/><circle cx="1219.00" cy="693.4" r="1.8"/><circle cx="1223.00" cy="693.4" r="1.8"/><circle cx="1227.00" cy="693.4" r="1.8"/><circle cx="1231.00" cy="693.4" r="1.8"/><circle cx="1235.00" cy="693.4" r="1.8"/><circle cx="1239.00" cy="693.4" r="1.8"/><circle cx="1243.00" cy="693.4" r="1.8"/><circle cx="1247.00" cy="693.4" r="1.8"/><circle cx="1251.00" cy="693.4" r="1.8"/><circle cx="1255.00" cy="693.4" r="1.8"/><circle cx="1259.00" cy="693.4" r="1.8"/><circle cx="1263.00" cy="693.4" r="1.8"/><circle cx="1267.00" cy="693.4" r="1.8"/><circle cx="1271.00" cy="693.4" r="1.8"/><circle cx="1275.00" cy="693.4" r="1.8"/><circle cx="1279.00" cy="693.4" r="1.8"/><circle cx="1283.00" cy="693.4" r="1.8"/><circle cx="1287.00" cy="693.4" r="1.8"/><circle cx="1291.00" cy="693.4" r="1.8"/><circle cx="1295.00" cy="693.4" r="1.8"/><circle cx="1299.00" cy="693.4" r="1.8"/><circle cx="1303.00" cy="693.4" r="1.8"/><circle cx="1307.00" cy="693.4" r="1.8"/><circle cx="1311.00" cy="693.4" r="1.8"/><circle cx="1315.00" cy="693.4" r="1.8"/><circle cx="1319.00" cy="693.4" r="1.8"/><circle cx="1323.00" cy="693.4" r="1.8"/><circle cx="1327.00" cy="693.4" r="1.8"/><circle cx="1331.00" cy="693.4" r="1.8"/><circle cx="1335.00" cy="693.4" r="1.8"/><circle cx="1339.00" cy="693.4" r="1.8"/><circle cx="1343.00" cy="693.4" r="1.8"/><circle cx="1347.00" cy="693.4" r="1.8"/><circle cx="1351.00" cy="693.4" r="1.8"/><circle cx="1355.00" cy="693.4" r="1.8"/><circle cx="1359.00" cy="693.4" r="1.8"/><circle cx="1363.00" cy="693.4" r="1.8"/><circle cx="1367.00" cy="693.4" r="1.8"/><circle cx="1371.00" cy="693.4" r="1.8"/><circle cx="1375.00" cy="693.4" r="1.8"/><circle cx="1379.00" cy="693.4" r="1.8"/><circle cx="1383.00" cy="693.4" r="1.8"/><circle cx="1387.00" cy="693.4" r="1.8"/><circle cx="1391.00" cy="693.4" r="1.8"/><circle cx="1395.00" cy="693.4" r="1.8"/><circle cx="1399.00" cy="693.4" r="1.8"/><circle cx="1403.00" cy="693.4" r="1.8"/><circle cx="1407.00" cy="693.4" r="1.8"/><circle cx="1411.00" cy="693.4" r="1.8"/><circle cx="1415.00" cy="693.4" r="1.8"/><circle cx="1419.00" cy="693.4" r="1.8"/><circle cx="1423.00" cy="693.4" r="1.8"/><circle cx="1427.00" cy="693.4" r="1.8"/><circle cx="1431.00" cy="693.4" r="1.8"/><circle cx="1435.00" cy="693.4" r="1.8"/><circle cx="1439.00" cy="693.4" r="1.8"/></g>
<line x1="154" y1="696" x2="154" y2="700" stroke="#c944b9" stroke-width="1.3"/>
<circle cx="154" cy="700" r="2.3" fill="#c944b9"/>
<line x1="159" y1="696" x2="159" y2="700" stroke="#c944b9" stroke-width="1.3"/>
<circle cx="159" cy="700" r="2.3" fill="#c944b9"/>
<line x1="163" y1="696" x2="163" y2="703" stroke="#c944b9" stroke-width="1.3"/>
<circle cx="163" cy="703" r="2.3" fill="#c944b9"/>
<line x1="166" y1="696" x2="166" y2="700" stroke="#c944b9" stroke-width="1.3"/>
<circle cx="166" cy="700" r="2.3" fill="#c944b9"/>
<line x1="173" y1="696" x2="173" y2="758" stroke="#c944b9" stroke-width="1.3"/>
<circle cx="173" cy="758" r="2.3" fill="#c944b9"/>
<line x1="176" y1="696" x2="176" y2="718" stroke="#c944b9" stroke-width="1.3"/>
<circle cx="176" cy="718" r="2.3" fill="#c944b9"/>
<circle cx="176" cy="712" r="2.3" fill="#c944b9"/>
<line x1="178" y1="696" x2="178" y2="731" stroke="#c944b9" stroke-width="1.3"/>
<circle cx="178" cy="731" r="2.3" fill="#c944b9"/>
<line x1="181" y1="696" x2="181" y2="731" stroke="#c944b9" stroke-width="1.3"/>
<circle cx="181" cy="731" r="2.3" fill="#c944b9"/>
<line x1="183" y1="696" x2="183" y2="715" stroke="#c944b9" stroke-width="1.3"/>
<circle cx="183" cy="715" r="2.3" fill="#c944b9"/>
<line x1="185" y1="696" x2="185" y2="706" stroke="#c944b9" stroke-width="1.3"/>
<circle cx="185" cy="706" r="2.3" fill="#c944b9"/>
<line x1="193" y1="696" x2="193" y2="713" stroke="#c944b9" stroke-width="1.3"/>
<circle cx="193" cy="713" r="2.3" fill="#c944b9"/>
<line x1="197" y1="696" x2="197" y2="700" stroke="#c944b9" stroke-width="1.3"/>
<circle cx="197" cy="700" r="2.3" fill="#c944b9"/>
<line x1="598" y1="696" x2="598" y2="700" stroke="#c944b9" stroke-width="1.3"/>
<circle cx="598" cy="700" r="2.3" fill="#c944b9"/>
<line x1="674" y1="696" x2="674" y2="703" stroke="#c944b9" stroke-width="1.3"/>
<circle cx="674" cy="703" r="2.3" fill="#c944b9"/>
<line x1="678" y1="696" x2="678" y2="703" stroke="#c944b9" stroke-width="1.3"/>
<circle cx="678" cy="703" r="2.3" fill="#c944b9"/>
<line x1="682" y1="696" x2="682" y2="700" stroke="#c944b9" stroke-width="1.3"/>
<circle cx="682" cy="700" r="2.3" fill="#c944b9"/>
<line x1="705" y1="696" x2="705" y2="703" stroke="#c944b9" stroke-width="1.3"/>
<circle cx="705" cy="703" r="2.3" fill="#c944b9"/>
<line x1="711" y1="696" x2="711" y2="720" stroke="#c944b9" stroke-width="1.3"/>
<circle cx="711" cy="710" r="2.3" fill="#c944b9"/>
<circle cx="711" cy="720" r="2.3" fill="#c944b9"/>
<line x1="800" y1="696" x2="800" y2="706" stroke="#c944b9" stroke-width="1.3"/>
<circle cx="800" cy="706" r="2.3" fill="#c944b9"/>
<line x1="806" y1="696" x2="806" y2="700" stroke="#c944b9" stroke-width="1.3"/>
<circle cx="806" cy="700" r="2.3" fill="#c944b9"/>
<line x1="836" y1="696" x2="836" y2="700" stroke="#c944b9" stroke-width="1.3"/>
<circle cx="836" cy="700" r="2.3" fill="#c944b9"/>
<line x1="859" y1="696" x2="859" y2="703" stroke="#c944b9" stroke-width="1.3"/>
<circle cx="859" cy="703" r="2.3" fill="#c944b9"/>
<line x1="864" y1="696" x2="864" y2="703" stroke="#c944b9" stroke-width="1.3"/>
<circle cx="864" cy="703" r="2.3" fill="#c944b9"/>
<line x1="1050" y1="696" x2="1050" y2="748" stroke="#c944b9" stroke-width="1.3"/>
<circle cx="1050" cy="710" r="2.3" fill="#c944b9"/>
<circle cx="1050" cy="734" r="2.3" fill="#c944b9"/>
<circle cx="1050" cy="748" r="2.3" fill="#c944b9"/>
<line x1="1052" y1="696" x2="1052" y2="724" stroke="#c944b9" stroke-width="1.3"/>
<circle cx="1052" cy="724" r="2.3" fill="#c944b9"/>
<line x1="1064" y1="696" x2="1064" y2="703" stroke="#c944b9" stroke-width="1.3"/>
<circle cx="1064" cy="703" r="2.3" fill="#c944b9"/>
<line x1="1089" y1="696" x2="1089" y2="700" stroke="#c944b9" stroke-width="1.3"/>
<circle cx="1089" cy="700" r="2.3" fill="#c944b9"/>
<line x1="1092" y1="696" x2="1092" y2="700" stroke="#c944b9" stroke-width="1.3"/>
<circle cx="1092" cy="700" r="2.3" fill="#c944b9"/>
<line x1="1124" y1="696" x2="1124" y2="717" stroke="#c944b9" stroke-width="1.3"/>
<circle cx="1124" cy="717" r="2.3" fill="#c944b9"/>
<line x1="1169" y1="696" x2="1169" y2="751" stroke="#c944b9" stroke-width="1.3"/>
<circle cx="1169" cy="720" r="2.3" fill="#c944b9"/>
<circle cx="1169" cy="744" r="2.3" fill="#c944b9"/>
<circle cx="1169" cy="751" r="2.3" fill="#c944b9"/>
<line x1="1171" y1="696" x2="1171" y2="703" stroke="#c944b9" stroke-width="1.3"/>
<circle cx="1171" cy="703" r="2.3" fill="#c944b9"/>
<line x1="1199" y1="696" x2="1199" y2="703" stroke="#c944b9" stroke-width="1.3"/>
<circle cx="1199" cy="703" r="2.3" fill="#c944b9"/>
<line x1="1211" y1="696" x2="1211" y2="700" stroke="#c944b9" stroke-width="1.3"/>
<circle cx="1211" cy="700" r="2.3" fill="#c944b9"/>
<line x1="1236" y1="696" x2="1236" y2="700" stroke="#c944b9" stroke-width="1.3"/>
<circle cx="1236" cy="700" r="2.3" fill="#c944b9"/>
<line x1="1255" y1="696" x2="1255" y2="724" stroke="#c944b9" stroke-width="1.3"/>
<circle cx="1255" cy="706" r="2.3" fill="#c944b9"/>
<circle cx="1255" cy="713" r="2.3" fill="#c944b9"/>
<circle cx="1255" cy="724" r="2.3" fill="#c944b9"/>
<line x1="1259" y1="696" x2="1259" y2="706" stroke="#c944b9" stroke-width="1.3"/>
<circle cx="1259" cy="700" r="2.3" fill="#c944b9"/>
<circle cx="1259" cy="706" r="2.3" fill="#c944b9"/>
<line x1="1264" y1="696" x2="1264" y2="713" stroke="#c944b9" stroke-width="1.3"/>
<circle cx="1264" cy="713" r="2.3" fill="#c944b9"/>
<line x1="1321" y1="696" x2="1321" y2="710" stroke="#c944b9" stroke-width="1.3"/>
<circle cx="1321" cy="710" r="2.3" fill="#c944b9"/>
<line x1="1344" y1="696" x2="1344" y2="710" stroke="#c944b9" stroke-width="1.3"/>
<circle cx="1344" cy="710" r="2.3" fill="#c944b9"/>
<line x1="1369" y1="696" x2="1369" y2="710" stroke="#c944b9" stroke-width="1.3"/>
<circle cx="1369" cy="710" r="2.3" fill="#c944b9"/>
<line x1="1392" y1="696" x2="1392" y2="720" stroke="#c944b9" stroke-width="1.3"/>
<circle cx="1392" cy="720" r="2.3" fill="#c944b9"/>
<line x1="1398" y1="696" x2="1398" y2="710" stroke="#c944b9" stroke-width="1.3"/>
<circle cx="1398" cy="710" r="2.3" fill="#c944b9"/>
<line x1="1423" y1="696" x2="1423" y2="710" stroke="#c944b9" stroke-width="1.3"/>
<circle cx="1423" cy="710" r="2.3" fill="#c944b9"/>
<line x1="1434" y1="696" x2="1434" y2="703" stroke="#c944b9" stroke-width="1.3"/>
<circle cx="1434" cy="703" r="2.3" fill="#c944b9"/>
<line x1="1438" y1="696" x2="1438" y2="700" stroke="#c944b9" stroke-width="1.3"/>
<circle cx="1438" cy="700" r="2.3" fill="#c944b9"/>
</svg>

<div class="wm" style="left:170px;top:128px">PerfDog</div>
<div class="wm" style="left:550px;top:128px">PerfDog</div>
<div class="wm" style="left:930px;top:128px">PerfDog</div>
<div class="wm" style="left:1310px;top:128px">PerfDog</div>
<div class="wm" style="left:166px;top:459px">PerfDog</div>
<div class="wm" style="left:546px;top:459px">PerfDog</div>
<div class="wm" style="left:926px;top:459px">PerfDog</div>
<div class="wm" style="left:1306px;top:459px">PerfDog</div>
<div class="wm" style="left:166px;top:790px">PerfDog</div>
<div class="wm" style="left:546px;top:790px">PerfDog</div>
<div class="wm" style="left:926px;top:790px">PerfDog</div>
<div class="wm" style="left:1306px;top:790px">PerfDog</div>
</body></html>
